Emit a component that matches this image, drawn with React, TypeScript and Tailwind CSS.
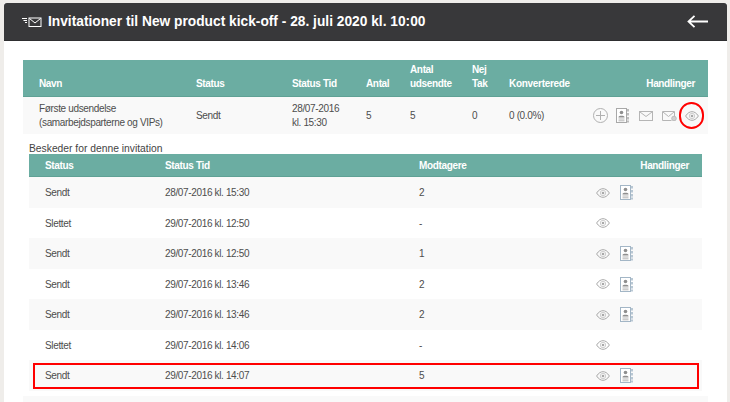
import React from 'react';

const PlusIcon = () => (
  <svg width="15" height="15" viewBox="0 0 15 15" fill="none" stroke="#b0b0b0" strokeWidth="1">
    <circle cx="7.500" cy="7.500" r="7" />
    <path d="M7.500 3v9M3 7.500h9" />
  </svg>
);

const DocIcon = ({ blue }: { blue?: boolean }) => (
  <svg width="13" height="15" viewBox="0 0 13 15" fill="none">
    <rect x="0.500" y="0.500" width="10" height="14" fill="#fff" stroke={blue ? '#a3b6c6' : '#a8a8a8'} />
    <circle cx="5.500" cy="4.500" r="1.800" fill="#8f8f8f" />
    <path d="M2.500 9c0-1.800 6-1.800 6 0v.500h-6z" fill="#8f8f8f" />
    <path d="M2.500 11h6M2.500 12.800h6" stroke="#b5b5b5" />
    <path d="M12 1v2.500M12 5v2.500M12 9v2.500M12 12.500v2" stroke={blue ? '#a3b6c6' : '#a8a8a8'} strokeWidth="1.500" />
  </svg>
);

const MailIcon = () => (
  <svg width="14" height="10" viewBox="0 0 14 10" fill="none" stroke="#b5b5b5">
    <rect x="0.500" y="0.500" width="13" height="9" />
    <path d="M1 1l6 4.500L13 1" />
  </svg>
);

const MailResendIcon = () => (
  <svg width="15" height="10" viewBox="0 0 15 10" fill="none" stroke="#b5b5b5">
    <path d="M9.500 9.500H0.500v-9h12v5" />
    <path d="M1 1l5.500 4.500L12 1" />
    <circle cx="12" cy="7.500" r="2.300" fill="#d0d0d0" stroke="#bbb" />
  </svg>
);

const EyeIcon = () => (
  <svg width="14" height="10" viewBox="0 0 14 10" fill="none" stroke="#a8a8a8">
    <path d="M0.600 5C2.800 1.700 4.900 0.700 7 0.700S11.200 1.700 13.400 5C11.200 8.300 9.100 9.300 7 9.300S2.800 8.300 0.600 5z" />
    <circle cx="7" cy="5" r="2.700" stroke="#cfcfcf" />
    <circle cx="7" cy="5" r="1.300" fill="#a8a8a8" stroke="none" />
  </svg>
);

const messages = [
  { status: 'Sendt', time: '28/07-2016 kl. 15:30', count: '2', doc: true },
  { status: 'Slettet', time: '29/07-2016 kl. 12:50', count: '-', doc: false },
  { status: 'Sendt', time: '29/07-2016 kl. 12:50', count: '1', doc: true },
  { status: 'Sendt', time: '29/07-2016 kl. 13:46', count: '2', doc: true },
  { status: 'Sendt', time: '29/07-2016 kl. 13:46', count: '2', doc: true },
  { status: 'Slettet', time: '29/07-2016 kl. 14:06', count: '-', doc: false },
  { status: 'Sendt', time: '29/07-2016 kl. 14:07', count: '5', doc: true },
];

const invitationCols = 'grid grid-cols-[157px_96px_74px_44px_62px_37px_1fr] items-center pl-4 pr-[13px]';
const messageCols = 'grid grid-cols-[120px_254px_177px_1fr] items-center pl-4 pr-[13px]';

export default function App() {
  return (
    <div className="h-[402px] w-[730px] overflow-hidden bg-[#efedea] pl-1 pr-[3px] pt-[3px] font-['Liberation_Sans',Arial,sans-serif] text-[10px] tracking-[-0.350px] text-[#4d4d4d]">
      <div className="h-full bg-white">
        <div className="flex h-[38px] items-center justify-between rounded-t-[3px] border-b border-[#2e2e30] bg-[#38383a] pl-[18px] pr-[19px]">
          <div className="flex items-center gap-[6px]">
            <svg width="20" height="10" viewBox="0 0 20 10" fill="none" stroke="#fff">
              <path d="M0 1.500h5M1.500 3.500h3.500M3 5.500h2" strokeWidth="1" />
              <rect x="7" y="1" width="12" height="8.500" />
              <path d="M7.500 1.500L13 6l5.500-4.500" />
            </svg>
            <h1 className="pt-[1px] text-[13.750px] font-bold leading-none tracking-normal text-white">
              Invitationer til New product kick-off - 28. juli 2020 kl. 10:00
            </h1>
          </div>
          <svg width="21" height="13" viewBox="0 0 21 13" fill="none" stroke="#fff" strokeWidth="1.800">
            <path d="M21 6.500H1.500M7.500 0.800L1.500 6.500l6 5.700" />
          </svg>
        </div>

        <div className="px-[19px] pt-[19px]">
          <div className={`${invitationCols} h-[37px] border-b border-[#5fa195] bg-[#6bada2] pb-[5px] font-bold leading-[14px] text-white`}>
            <div className="self-end">Navn</div>
            <div className="self-end">Status</div>
            <div className="self-end">Status Tid</div>
            <div className="self-end">Antal</div>
            <div className="self-end">Antal<br />udsendte</div>
            <div className="self-end">Nej<br />Tak</div>
            <div className="flex justify-between self-end">
              <span className="tracking-[-0.300px]">Konverterede</span>
              <span>Handlinger</span>
            </div>
          </div>
          <div className={`${invitationCols} h-[37px] bg-[#f9f9f9] leading-[14px]`}>
            <div>Første udsendelse<br />(samarbejdsparterne og VIPs)</div>
            <div>Sendt</div>
            <div>28/07-2016<br />kl. 15:30</div>
            <div>5</div>
            <div>5</div>
            <div>0</div>
            <div className="flex items-center justify-between">
              <span>0 (0.0%)</span>
              <div className="relative mr-[-4px] flex items-center">
                <PlusIcon />
                <span className="ml-2"><DocIcon /></span>
                <span className="ml-[10px] flex"><MailIcon /></span>
                <span className="ml-[9px] flex"><MailResendIcon /></span>
                <span className="ml-2 flex"><EyeIcon /></span>
                <div className="absolute right-[-5px] top-[-6px] h-[27px] w-[25px] rounded-full border-2 border-[#f00]" />
              </div>
            </div>
          </div>

          <div className="px-[6px]">
            <p className="mt-[7px] h-[13px] pt-[1px] text-[10.300px] leading-[13px] tracking-normal text-[#444]">Beskeder for denne invitation</p>
            <div className={`${messageCols} h-[23px] border-b border-[#5fa195] bg-[#6bada2] pt-[1px] font-bold text-white`}>
              <div>Status</div>
              <div>Status Tid</div>
              <div>Modtagere</div>
              <div className="text-right">Handlinger</div>
            </div>
            {messages.map((m, i) => (
              <div key={i} className={`${messageCols} relative h-[30.500px] pt-[1px] ${i % 2 === 0 ? 'bg-[#f9f9f9]' : 'bg-white'}`}>
                <div>{m.status}</div>
                <div>{m.time}</div>
                <div>{m.count}</div>
                <div className="flex items-center gap-[10px]">
                  <EyeIcon />
                  {m.doc && <DocIcon blue />}
                </div>
                {i === messages.length - 1 && (
                  <div className="absolute bottom-[2px] left-[4px] right-[3px] top-[3px] border-2 border-[#f00]" />
                )}
              </div>
            ))}
          </div>
          <div className="mt-[5px] h-[10px] bg-[#f9f9f9]" />
        </div>
      </div>
    </div>
  );
}
